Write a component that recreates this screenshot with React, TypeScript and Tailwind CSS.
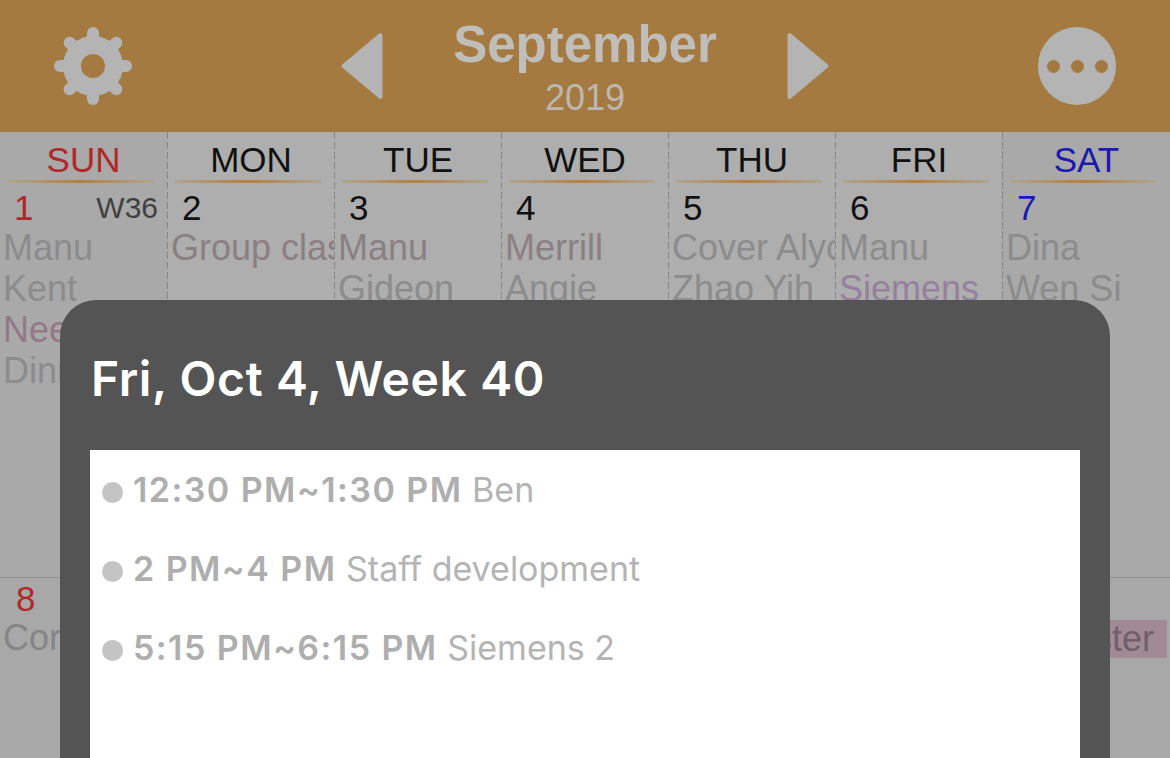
import React from 'react';

type Day = {
  name: string;
  num: string;
  tone: string;
  week?: string;
  events: { text: string; color: string }[];
};

const grey = 'text-[#8c8c8c]';
const mauve = 'text-[#8a8082]';

const days: Day[] = [
  {
    name: 'SUN',
    num: '1',
    tone: 'text-[#b02828]',
    week: 'W36',
    events: [
      { text: 'Manu', color: grey },
      { text: 'Kent', color: grey },
      { text: 'Neela', color: 'text-[#957885]' },
      { text: 'Dinner', color: grey },
    ],
  },
  { name: 'MON', num: '2', tone: 'text-[#111111]', events: [{ text: 'Group class', color: mauve }] },
  {
    name: 'TUE',
    num: '3',
    tone: 'text-[#111111]',
    events: [
      { text: 'Manu', color: mauve },
      { text: 'Gideon', color: grey },
    ],
  },
  {
    name: 'WED',
    num: '4',
    tone: 'text-[#111111]',
    events: [
      { text: 'Merrill', color: mauve },
      { text: 'Angie', color: grey },
    ],
  },
  {
    name: 'THU',
    num: '5',
    tone: 'text-[#111111]',
    events: [
      { text: 'Cover Alyce', color: grey },
      { text: 'Zhao Yih', color: grey },
    ],
  },
  {
    name: 'FRI',
    num: '6',
    tone: 'text-[#111111]',
    events: [
      { text: 'Manu', color: grey },
      { text: 'Siemens', color: 'text-[#96809e]' },
    ],
  },
  {
    name: 'SAT',
    num: '7',
    tone: 'text-[#1a1ab0]',
    events: [
      { text: 'Dina', color: grey },
      { text: 'Wen Si', color: grey },
    ],
  },
];

const agenda = [
  { time: '12:30 PM~1:30 PM', title: 'Ben' },
  { time: '2 PM~4 PM', title: 'Staff development' },
  { time: '5:15 PM~6:15 PM', title: 'Siemens 2' },
];

const GearIcon = () => (
  <svg width="78" height="78" viewBox="0 0 78 78" fill="#b4b4b4">
    <path
      fillRule="evenodd"
      d="M39 9a30 30 0 1 0 0 60a30 30 0 1 0 0-60ZM39 27a12 12 0 1 1 0 24a12 12 0 1 1 0-24Z"
    />
    {[0, 45, 90, 135, 180, 225, 270, 315].map((a) => (
      <rect key={a} x="33" y="0" width="12" height="20" rx="6" transform={`rotate(${a} 39 39)`} />
    ))}
  </svg>
);

const Arrow = ({ right }: { right?: boolean }) => (
  <svg width="44" height="68" viewBox="0 0 44 68" fill="#b4b4b4">
    <polygon
      points={right ? '2.5,3 2.5,65 39.5,34' : '41.5,3 41.5,65 4.5,34'}
      stroke="#b4b4b4"
      strokeWidth="4"
      strokeLinejoin="round"
    />
  </svg>
);

const MoreIcon = () => (
  <div className="flex h-[78px] w-[78px] items-center justify-center gap-[11px] rounded-full bg-[#b4b4b4]">
    <span className="h-[13px] w-[13px] rounded-full bg-[#a47a41]" />
    <span className="h-[13px] w-[13px] rounded-full bg-[#a47a41]" />
    <span className="h-[13px] w-[13px] rounded-full bg-[#a47a41]" />
  </div>
);

const DayColumn = ({ day, first }: { day: Day; first: boolean }) => {
  const shaded = day.name === 'SUN' || day.name === 'SAT';
  return (
    <div className={`flex min-w-0 ${shaded ? 'bg-[#a9a9a9]' : 'bg-[#aeaeae]'}`}>
      {!first && (
        <div className="w-px shrink-0 bg-[repeating-linear-gradient(to_bottom,#868686_0,#868686_7px,transparent_7px,transparent_10px)]" />
      )}
      <div className="flex min-w-0 flex-1 flex-col overflow-hidden">
        <div className={`mt-[9px] h-[38px] text-center text-[35px] leading-[38px] ${day.tone}`}>{day.name}</div>
        <div className="ml-[7px] mr-[13px] mt-[1px] h-[3px] bg-gradient-to-r from-[#b0a48f] via-[#b47f3f] to-[#b0a48f]" />
        <div className="mt-[3px] flex h-[44px] items-center justify-between pl-[14px] pr-[9px] text-[35px]">
          <span className={day.tone}>{day.num}</span>
          {day.week && <span className="-mt-[2px] text-[30px] text-[#404040]">{day.week}</span>}
        </div>
        <div className="-mt-[2px] pl-[3px]">
          {day.events.map((ev) => (
            <div
              key={ev.text}
              className={`h-[41px] overflow-hidden whitespace-nowrap text-[36px] leading-[39px] ${ev.color}`}
            >
              {ev.text}
            </div>
          ))}
        </div>
      </div>
    </div>
  );
};

export default function App() {
  return (
    <div className="relative h-[758px] w-[1170px] overflow-hidden bg-[#aaaaaa] font-['Liberation_Sans',Arial,sans-serif]">
      <header className="flex h-[132px] items-center justify-between bg-[#a47a41] px-[54px]">
        <GearIcon />
        <div className="flex items-center gap-[70px]">
          <Arrow />
          <div className="mt-[3px] flex flex-col items-center">
            <span className="text-[51px] font-bold leading-[58px] text-[#c0bebb]">September</span>
            <span className="mt-[3px] text-[36px] leading-[42px] text-[#bcb8b0]">2019</span>
          </div>
          <Arrow right />
        </div>
        <MoreIcon />
      </header>

      <div className="grid h-[445px] grid-cols-[repeat(6,167px)_1fr]">
        {days.map((d, i) => (
          <DayColumn key={d.name} day={d} first={i === 0} />
        ))}
      </div>

      <div className="grid h-[181px] grid-cols-[repeat(6,167px)_1fr] border-t border-[#8e8e8e] bg-[#a8a8a8]">
        <div className="flex flex-col overflow-hidden pl-[3px]">
          <span className="h-[42px] pl-[13px] text-[35px] leading-[42px] text-[#b02828]">8</span>
          <span className="-mt-[1px] text-[36px] leading-[38px] text-[#858585]">Cornell</span>
        </div>
        <div className="col-span-4" />
        <div />
        <div className="pt-[42px]">
          <div className="mr-[3px] h-[38px] overflow-hidden whitespace-nowrap bg-[#a28a94] pl-[2px] text-[36px] leading-[38px] text-[#6e5f68]">
            Jo Foster
          </div>
        </div>
      </div>

      {/* dialog sits over the dimmed calendar */}
      <div className="absolute left-[60px] top-[300px] w-[1050px] rounded-t-[36px] bg-[#545454] px-[30px] pt-[50px]">
        <h2 className="pl-[1px] font-['Inter',sans-serif] text-[48px] font-semibold leading-[58px] tracking-[0.6px] text-white">
          Fri, Oct 4, Week 40
        </h2>
        <div className="mt-[42px] h-[400px] bg-white pl-[12px] pt-[19px] font-['Inter',sans-serif] text-[34px] text-[#b4b4b4]">
          {agenda.map((row) => (
            <div key={row.time} className="flex h-[79px] items-start gap-[10px] leading-[42px]">
              <span className="mt-[13px] h-[21px] w-[21px] shrink-0 rounded-full bg-[#c4c4c4]" />
              <span className="whitespace-nowrap">
                <b className="font-semibold tracking-[1.45px] text-[#aeaeae]">{row.time}</b> {row.title}
              </span>
            </div>
          ))}
        </div>
      </div>
    </div>
  );
}
